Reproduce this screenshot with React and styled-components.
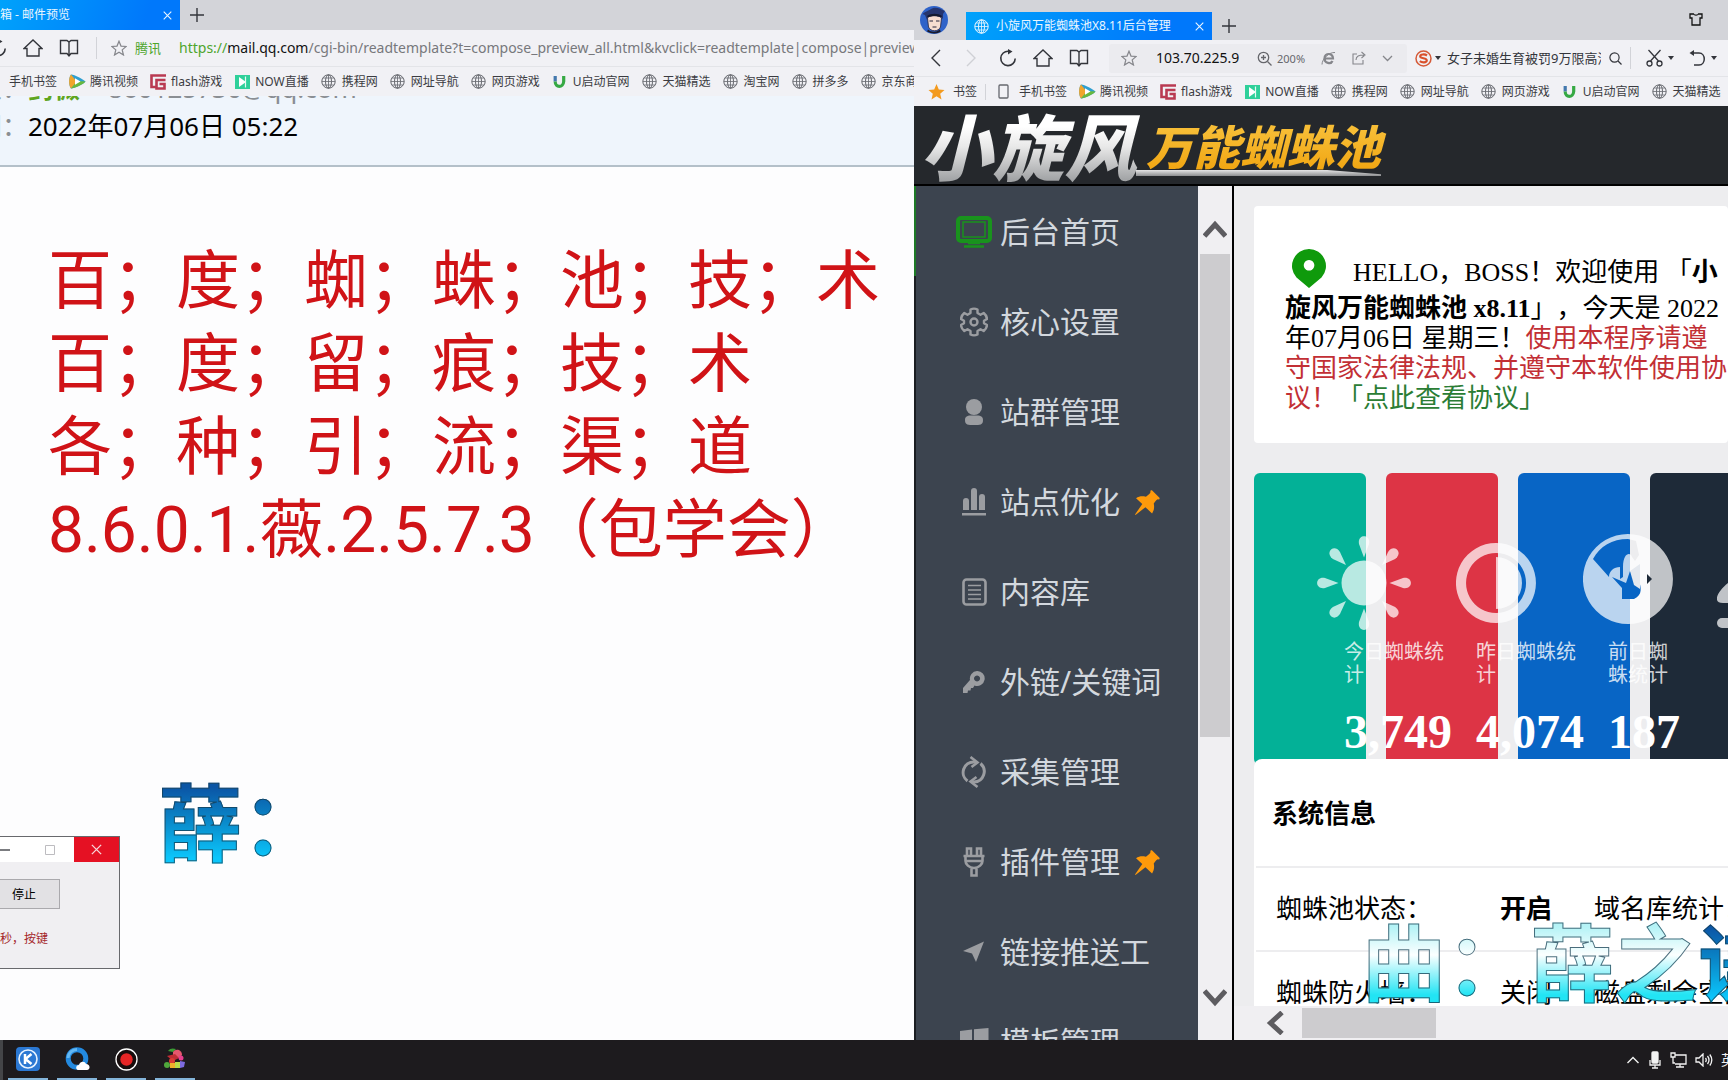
import React from 'react';
import styled, { createGlobalStyle, css } from 'styled-components';

const sans = '"Noto Sans", "Noto Sans CJK SC", sans-serif';
const serif = '"Liberation Serif", "Noto Sans CJK SC", serif';

const GlobalStyle = createGlobalStyle`
  * { box-sizing: border-box; }
  body { margin: 0; overflow: hidden; font-family: ${sans}; text-spacing-trim: space-all; color: #000; background: #fdfdfe; }
  button, input { font: inherit; color: inherit; }
  a { color: inherit; text-decoration: none; }
  svg { display: block; flex: none; }
`;

/* ---------- desktop ---------- */

const Screen = styled.div`
  display: flex;
  flex-direction: column;
  height: 100vh;
  overflow: hidden;
`;

const Desktop = styled.div`
  position: relative;
  display: flex;
  flex: 1;
  min-height: 0;
`;

const BrowserWindow = styled.section`
  display: flex;
  flex-direction: column;
  flex: ${(p) => p.$share} 1 0;
  min-width: 0;
  overflow: hidden;
`;

/* ---------- browser chrome ---------- */

const PlainButton = styled.button`
  display: flex;
  align-items: center;
  justify-content: center;
  flex: none;
  border: 0;
  padding: 0;
  background: none;
  color: ${(p) => p.$color || '#33353b'};
`;

const TabStrip = styled.div`
  display: flex;
  align-items: flex-end;
  flex: none;
  height: ${(p) => p.$height};
  background: #d3d4d9;
`;

const Tab = styled.div`
  display: flex;
  align-items: center;
  flex: none;
  width: ${(p) => p.$width};
  height: ${(p) => p.$height};
  padding: 0 8px 0 ${(p) => p.$start};
  gap: 7px;
  color: #eaf6ff;
  font-size: 12px;
  line-height: 18px;
  white-space: nowrap;
  background: linear-gradient(110deg, #00a2fb, #0078fb 80%);
`;

const TabTitle = styled.span`
  display: flex;
  justify-content: ${(p) => (p.$clipStart ? 'flex-end' : 'flex-start')};
  width: ${(p) => p.$width || 'auto'};
  overflow: hidden;
`;

const CloseTab = styled(PlainButton)`
  margin-left: auto;
`;

const NewTab = styled(PlainButton)`
  width: 34px;
  height: ${(p) => p.$height};
`;

const AvatarSlot = styled.div`
  width: 52px;
  padding: 0 0 6px 6px;
`;

const SkinButton = styled(PlainButton)`
  margin: 0 25px 14px auto;
`;

const Toolbar = styled.div`
  display: flex;
  align-items: center;
  flex: none;
  height: 37px;
  color: #33353b;
  background: #f1f1f5;
  border-bottom: 1px solid #e3e4e8;
  overflow: hidden;
`;

const NavButtons = styled.div`
  display: flex;
  align-items: center;
  gap: 16px;
  padding-right: ${(p) => p.$end};
  margin-left: ${(p) => p.$start};
`;

const Divider = styled.span`
  flex: none;
  width: 1px;
  height: ${(p) => p.$height || '22px'};
  margin: 0 ${(p) => p.$inset || '0px'};
  background: #d2d3d8;
`;

const SiteLine = styled.div`
  display: flex;
  align-items: center;
  padding-left: 14px;
  font-size: 14px;
  line-height: 20px;
  white-space: nowrap;
`;

const SiteOwner = styled.span`
  margin: 0 18px 0 8px;
  color: #4ea52c;
  font-size: 13px;
`;

const Url = styled.a`
  color: #77787c;
  b { color: #111; font-weight: 400; }
  i { color: #4ea52c; font-style: normal; }
`;

const AddressBox = styled.div`
  display: flex;
  align-items: center;
  flex: none;
  width: 298px;
  height: 29px;
  padding-left: 12px;
  border-radius: 3px;
  color: #85868b;
  background: #ebebef;
`;

const BareInput = styled.input`
  width: ${(p) => p.$width};
  flex: none;
  border: 0;
  padding: 0;
  margin: 0 ${(p) => p.$after} 0 ${(p) => p.$before};
  outline: 0;
  background: none;
  color: ${(p) => p.$color};
  font-size: ${(p) => p.$size};
  line-height: 20px;
`;

const AddressTools = styled.div`
  display: flex;
  align-items: center;
  gap: 16px;
  font-size: 11px;
`;

const ToolButton = styled(PlainButton)`
  gap: 5px;
`;

const SearchBox = styled.label`
  display: flex;
  align-items: center;
  flex: none;
  gap: 3px;
  padding: 0 8px;
`;

const EditTools = styled.div`
  display: flex;
  align-items: center;
  gap: 15px;
  padding-left: 15px;
`;

const Bookmarks = styled.nav`
  display: flex;
  align-items: center;
  flex: none;
  gap: 11px;
  height: 29px;
  padding-left: ${(p) => p.$start};
  color: #3b3c42;
  font-size: 12px;
  line-height: 18px;
  white-space: nowrap;
  background: #f1f1f5;
  overflow: hidden;
`;

const Bookmark = styled.a`
  display: flex;
  align-items: center;
  flex: none;
  gap: ${(p) => p.$gap || '4px'};
`;

const IconSlot = styled.span`
  display: flex;
  align-items: center;
  justify-content: center;
  width: 18px;
  color: #66686e;
`;

/* ---------- mail page ---------- */

const MailHeader = styled.header`
  display: flex;
  flex-direction: column;
  justify-content: flex-end;
  flex: none;
  height: 71px;
  padding-bottom: 20px;
  overflow: hidden;
  font-size: 26px;
  line-height: 38px;
  white-space: nowrap;
  background: #eff5fc;
  border-bottom: 2px solid #b4c0c9;
`;

const MailField = styled.div`
  display: flex;
  flex: none;
`;

const MailLabel = styled.span`
  display: flex;
  justify-content: flex-end;
  width: 28px;
  overflow: hidden;
  color: #8a8e93;
`;

const Sender = styled.span`
  color: ${(p) => (p.$name ? '#5fa51f' : '#8a8e93')};
  font-weight: ${(p) => (p.$name ? 700 : 400)};
  margin-right: 28px;
`;

const MailBody = styled.main`
  flex: 1;
  padding: 73px 0 0 48px;
  color: #d01317;
  font-family: Roboto, "Noto Sans CJK SC", sans-serif;
  font-size: 64px;
  line-height: 83px;
  white-space: nowrap;
  background: #fdfdfe;
  p { margin: 0; }
`;

/* ---------- small dialog ---------- */

const Dialog = styled.aside`
  position: absolute;
  left: 0;
  bottom: 71px;
  width: 120px;
  height: 133px;
  border: 1px solid #68696d;
  border-left: 0;
  background: #f0eff2;
  font-size: 12px;
  line-height: 18px;
`;

const DialogBar = styled.div`
  display: flex;
  align-items: stretch;
  height: 25px;
  background: #fff;
`;

const MaximizeDialog = styled(PlainButton)`
  margin: 0 19px 0 auto;
`;

const CloseDialog = styled(PlainButton)`
  width: 45px;
  background: #e51123;
`;

const StopButton = styled.button`
  display: block;
  width: 60px;
  height: 30px;
  margin: 17px 0 0;
  padding: 2px 12px 0;
  border: 1px solid #aaa9ad;
  border-left: 0;
  text-align: left;
  background: #e2e1e4;
`;

const DialogNote = styled.p`
  margin: 21px 0 0;
  color: #a5262a;
`;

/* ---------- admin page ---------- */

const AdminHeader = styled.header`
  display: flex;
  align-items: flex-start;
  flex: none;
  height: 80px;
  padding-left: 6px;
  overflow: hidden;
  background: #25282c;
  border-bottom: 2px solid #000;
`;

const Logo = styled.div`
  position: relative;
  display: flex;
  font-style: italic;
  font-weight: 900;
  white-space: nowrap;
`;

const LogoText = styled.span`
  padding-right: ${(p) => p.$tail};
  font-size: ${(p) => p.$size};
  line-height: 82px;
  color: transparent;
  background: ${(p) => p.$fill};
  background-clip: text;
  -webkit-background-clip: text;
`;

const LogoRule = styled.span`
  position: absolute;
  left: 216px;
  right: 14px;
  top: 64px;
  height: 6px;
  background: linear-gradient(#e6e6e6, #8d8f91);
  clip-path: polygon(0 0, 78% 0, 100% 70%, 100% 100%, 0 100%);
`;

const AdminBody = styled.div`
  display: flex;
  flex: 1;
  min-height: 0;
`;

const SideMenu = styled.nav`
  flex: none;
  width: 284px;
  overflow: hidden;
  background: #3c444f;
`;

const MenuItem = styled.a`
  display: flex;
  align-items: center;
  height: 90px;
  padding: 2px 0 0 38px;
  border-left: 2px solid ${(p) => (p.$active ? '#1d7a26' : '#1b1e22')};
  color: #d3d8de;
  font-size: 30px;
  line-height: 40px;
  white-space: nowrap;
`;

const MenuIcon = styled.span`
  display: flex;
  justify-content: center;
  width: 40px;
  margin-right: 6px;
  color: #9b9da1;
`;

const MenuPin = styled.span`
  margin-left: 15px;
`;

const VerticalScroll = styled.div`
  display: flex;
  flex-direction: column;
  align-items: center;
  flex: none;
  width: 36px;
  padding-bottom: 30px;
  background: #f0eff2;
  border-right: 2px solid #000;
`;

const ScrollEnd = styled(PlainButton)`
  width: 32px;
  height: ${(p) => p.$height};
  padding-top: ${(p) => p.$top || '0px'};
  color: #5d5c60;
`;

const ScrollTrack = styled.div`
  flex: 1;
  width: 30px;
`;

const VerticalThumb = styled.div`
  height: 66%;
  background: #cdcccf;
`;

const Workspace = styled.div`
  display: flex;
  flex-direction: column;
  flex: 1;
  min-width: 0;
`;

const WorkPage = styled.main`
  flex: 1;
  min-height: 0;
  padding: 20px 0 0 20px;
  overflow: hidden;
  background: #ededef;
`;

const Notice = styled.section`
  height: 237px;
  padding: 40px 0 0 31px;
  border-radius: 4px;
  background: #fff;
  font-family: ${serif};
  font-size: 26px;
  line-height: 30px;
  white-space: nowrap;
  p { margin: 0; }
`;

const NoticeLead = styled.span`
  display: flex;
  align-items: flex-end;
  gap: 27px;
  height: 42px;
  padding-left: 7px;
  margin-bottom: 6px;
`;

const Warning = styled.span`
  color: #c22f35;
`;

const Agreement = styled.a`
  color: #2b7d35;
`;

const StatRow = styled.section`
  display: flex;
  gap: 20px;
  margin-top: 30px;
`;

const StatCard = styled.article`
  flex: none;
  width: 112px;
  height: 292px;
  border-radius: 6px;
  background: ${(p) => p.$fill};
  font-family: ${serif};
`;

const StatContent = styled.div`
  position: relative;
  z-index: 1;
  width: ${(p) => p.$width};
  padding: 52px 0 0 60px;
`;

const StatIcon = styled.div`
  display: flex;
  align-items: center;
  justify-content: center;
  width: 100px;
  height: 116px;
  color: rgba(255, 255, 255, 0.72);
`;

const StatLabel = styled.div`
  height: 63px;
  margin-left: 30px;
  color: rgba(255, 255, 255, 0.8);
  font-size: 20px;
  line-height: 23px;
`;

const StatValue = styled.strong`
  display: block;
  margin-left: 30px;
  color: #fff;
  font-size: 48px;
  line-height: 56px;
`;

const InfoPanel = styled.section`
  position: relative;
  z-index: 2;
  margin-top: -6px;
  border-radius: 8px 0 0 0;
  background: #fff;
  font-size: 26px;
  white-space: nowrap;
`;

const InfoTitle = styled.h2`
  margin: 0;
  padding: 34px 0 33px 18px;
  font-size: 26px;
  line-height: 40px;
`;

const InfoTable = styled.table`
  margin-left: 2px;
  border-collapse: collapse;
  table-layout: fixed;
  width: 800px;
`;

const InfoCell = styled.td`
  width: ${(p) => p.$width || 'auto'};
  height: 84px;
  padding: 0 0 3px 20px;
  border-top: 2px solid #ededef;
  font-weight: ${(p) => (p.$strong ? 700 : 400)};
  line-height: 40px;
`;

const HorizontalScroll = styled.div`
  display: flex;
  align-items: center;
  flex: none;
  gap: 11px;
  height: 34px;
  padding-left: 25px;
  background: #f0eff2;
`;

const HorizontalThumb = styled.div`
  width: 134px;
  height: 30px;
  background: #cdcccf;
`;

/* ---------- lyrics drawn over the windows ---------- */

const Lyric = styled.div`
  position: absolute;
  left: ${(p) => p.$left};
  bottom: ${(p) => p.$bottom};
  z-index: 5;
  display: flex;
  font-size: 84px;
  font-weight: 700;
  line-height: 100px;
  white-space: nowrap;
  pointer-events: none;
`;

const sung = css`
  background-image: linear-gradient(#0b55a5 14%, #0a8ccc 50%, #0bc6fb 85%);
`;
const unsung = css`
  background-image: linear-gradient(#b5f3f6 14%, #fbffff 42%, #22e4f4 82%);
`;

const LyricPart = styled.span`
  ${(p) => (p.$sung ? sung : unsung)}
  color: transparent;
  background-clip: text;
  -webkit-background-clip: text;
  -webkit-text-stroke: 1px rgba(20, 60, 80, 0.75);
`;

/* ---------- task bar ---------- */

const Taskbar = styled.footer`
  display: flex;
  align-items: stretch;
  flex: none;
  height: 40px;
  color: #f2f2f2;
  background: #1d1b1e;
  overflow: hidden;
`;

const TaskEdge = styled.span`
  width: 3px;
  margin-right: 5px;
  background: #444548;
`;

const TaskButton = styled(PlainButton)`
  width: 40px;
  margin-right: 9px;
  border-bottom: 2px solid #84b5da;
`;

const Tray = styled.div`
  display: flex;
  align-items: center;
  gap: 8px;
  width: 102px;
  margin-left: auto;
  font-size: 14px;
  line-height: 20px;
  white-space: nowrap;
`;

/* ---------- drawings ---------- */

const Line = ({ w, h, box, sw = 1.3, children }) => (
  <svg width={w} height={h || w} viewBox={box || `0 0 ${w} ${h || w}`} fill="none" stroke="currentColor" strokeWidth={sw} aria-hidden="true">
    {children}
  </svg>
);

const Solid = ({ w, h, box, children }) => (
  <svg width={w} height={h || w} viewBox={box || `0 0 ${w} ${h || w}`} fill="currentColor" aria-hidden="true">
    {children}
  </svg>
);

const GlobeIcon = () => (
  <Line w={15} sw={1}>
    <circle cx="7.5" cy="7.5" r="6.7" />
    <ellipse cx="7.5" cy="7.5" rx="3" ry="6.7" />
    <path d="M7.5 .8v13.4M.8 7.500h13.4M2 4h11M2 11h11" strokeWidth=".8" />
  </Line>
);
const PlusIcon = () => <Line w={14} sw={1.4}><path d="M7 0v14M0 7h14" /></Line>;
const CrossIcon = ({ size = 9 }) => <Line w={size} box="0 0 9 9" sw={1.1}><path d="M.7.7l7.6 7.6M8.3.7L.7 8.3" /></Line>;
const ReloadIcon = () => (
  <Line w={18} sw={1.6}>
    <path d="M9.5 2.2A7.2 7.2 0 1 0 16.2 9.5" />
    <path d="M9 0l4.5 2.4L9 5.4z" fill="currentColor" stroke="none" />
  </Line>
);
const HomeIcon = () => <Line w={20} sw={1.4}><path d="M1 10.5L10 2l9 8.500h-3V18H4v-7.500z" /></Line>;
const BookIcon = () => <Line w={20} sw={1.4}><path d="M1.500 2.500H8l2 1.500 2-1.500h6.500v13H12L10 18l-2-2.500H1.500zM10 4v13.500" /></Line>;
const StarIcon = () => <Line w={16} sw={1.200}><path d="M8 1.200l2 4.900 5.200.4-4 3.400 1.300 5.100L8 12.200 3.500 15l1.300-5.100-4-3.400L6 6.100z" /></Line>;
const CaretIcon = () => <Solid w={6} h={4}><path d="M0 0h6L3 4z" /></Solid>;

const VideoIcon = () => (
  <svg width="17" height="15" viewBox="0 0 17 15" aria-hidden="true">
    <path d="M2 .5C4 0 15 5.500 16.500 7.500 15 10 5 14.500 2 14.500-.5 12-.5 3 2 .5z" fill="#2f9fd0" />
    <path d="M2 .5C-.5 3-.5 12 2 14.500L8 8z" fill="#f0a52c" />
    <path d="M2 14.500c3 0 13-4.500 14.500-7L8 7z" fill="#69b83c" />
    <path d="M6 4.300l5.500 3.200L6 10.700z" fill="#fff" />
  </svg>
);
const FlashIcon = () => (
  <svg width="16" height="16" viewBox="0 0 16 16" fill="none" stroke="#b93a52" strokeWidth="2.600" aria-hidden="true">
    <path d="M16 1.500H1.500v11.500h4M15.500 6H6.500v8.500h8V10H9.500" />
  </svg>
);
const NowIcon = () => (
  <svg width="15" height="14" viewBox="0 0 15 14" aria-hidden="true">
    <path d="M0 0h15v14H0z" fill="#2fd09a" />
    <path d="M4 2l7 5-7 5z" fill="#fff" />
    <path d="M10.500 1.500v11" stroke="#e9fbf4" strokeWidth="1.200" />
  </svg>
);
const UIcon = () => (
  <svg width="14" height="14" viewBox="0 0 14 14" fill="none" strokeWidth="3.200" aria-hidden="true">
    <path d="M2.200 1v5.500" stroke="#4378ad" />
    <path d="M2.200 6.500c0 6.500 8 6.500 8.500 0V1" stroke="#36a944" />
  </svg>
);
const OrangeStar = () => <svg width="17" height="16" viewBox="0 0 16 16" aria-hidden="true"><path fill="#f39a1e" d="M8 0l2.300 5.400 5.700.5-4.300 3.800L13 15.500 8 12.300l-5 3.200 1.300-5.800L0 5.900l5.700-.5z" /></svg>;
const PhoneIcon = () => <Line w={11} h={15}><rect x="1" y="1" width="9" height="13" rx="1" /></Line>;

const Avatar = () => (
  <svg width="28" height="28" viewBox="0 0 28 28" aria-hidden="true">
    <circle cx="14" cy="14" r="14" fill="#2f63c9" />
    <path d="M7.500 12c0-3 13-3 14 0l-1 9c-2 5-10 5-12 0z" fill="#f7ddd0" stroke="#20203a" strokeWidth=".8" />
    <path d="M2.500 8C6 5 8 5 11 3c5-3 9 0 14 2l-2 3v5l-2-2c-4-2-9-2-13 0l-1 3-2-5z" fill="#26356e" />
    <path d="M7 10c4-3 11-3 15 0l-1 1.500c-4-2-9-2-13 0z" fill="#151a30" />
    <path d="M9.500 15h3.500M16 15h3.500M12.500 21h4" stroke="#26243a" />
    <path d="M8 23.500l-1 2c5 2.500 10 2.500 14 0l-1.500-2c-3 3-8 3-11.500 0z" fill="#1c1c2c" />
  </svg>
);

const PushPin = () => (
  <svg width="25" height="25" viewBox="0 0 24 24" aria-hidden="true">
    <path fill="#ff9a0a" d="M16.500.5l7 7c.4 1-.3 1.700-1 1.500-1.400-.2-2.100.6-4.500 4 .8 4 .2 6.500-1.600 9.500L10 16.500.5 24 0 23.500 7 13.500 1 8c3-2 5.500-2.300 9.500-1.500 3-2.500 4.700-3.500 4.300-5-.2-.9.700-1.700 1.700-1z" />
  </svg>
);

const menuIcons = {
  screen: (
    <svg width="36" height="32" viewBox="0 0 36 32" fill="none" stroke="#19931d" aria-hidden="true">
      <rect x="2" y="2" width="32" height="23" rx="3" strokeWidth="4" />
      <rect x="7" y="6" width="22" height="15" strokeWidth="1.500" />
      <path d="M12 27h12M8 30.500h20" strokeWidth="2.500" />
    </svg>
  ),
  gear: (
    <Line w={28} h={30} sw={2.400}>
      <path d="M10.500 2.500q3.500-1.800 7 0v3.500l3 1.800 3.200-1.800q3 2.500 3.300 6l-3 1.800v2.400l3 1.800q-.3 3.500-3.300 6l-3.200-1.800-3 1.800v3.500q-3.500 1.800-7 0v-3.500l-3-1.800-3.200 1.800q-3-2.500-3.300-6l3-1.800v-2.400l-3-1.800q.3-3.500 3.300-6l3.200 1.800 3-1.800z" strokeLinejoin="round" />
      <circle cx="14" cy="15" r="3.500" />
    </Line>
  ),
  user: <Solid w={20} h={26}><circle cx="10" cy="8" r="8" /><path d="M1 21c0-5 5-4.500 9-4.500s9-.5 9 4.500c0 5-3 5-9 5s-9 0-9-5z" /></Solid>,
  chart: <Solid w={24} h={28}><rect x="1" y="10" width="6" height="12" rx="3" /><rect x="9" width="6" height="22" rx="3" /><rect x="17" y="6" width="6" height="16" rx="3" /><path d="M1 18h6v4H1zM9 18h6v4H9zM17 18h6v4h-6zM0 25h24v2.500H0z" /></Solid>,
  list: <Line w={25} h={28} sw={2.600}><rect x="1.500" y="1.500" width="22" height="25" rx="3" /><path d="M6 7.500h13M6 12h13M6 16.500h13M6 21h13" strokeWidth="1.500" /></Line>,
  key: <Solid w={22} h={22}><path fillRule="evenodd" d="M14 0a7.500 7.500 0 1 1-2.500 14.500L10 17H8l-.5 2.500H5L4.500 22H0v-5l7-8A7.500 7.500 0 0 1 14 0zm0 4.500a3 3 0 1 0 .1 0z" /></Solid>,
  cycle: (
    <Line w={26} h={32} sw={3}>
      <path d="M6.500 25A10.500 10.500 0 0 1 13 6h2M19.500 7.500A10.500 10.500 0 0 1 13 26h-2" />
      <path d="M9.500 1l7 5.500-6 4.500M16.500 31l-7-5.500 6-4.500" strokeWidth="2.600" />
    </Line>
  ),
  plug: <Line w={22} h={30} sw={2.600}><path d="M4 8V1.500h4V8M14 8V1.500h4V8M.5 9h21M2.500 9v5c0 3 3.500 7 8.500 7s8.500-4 8.500-7V9M3 14h16M8.500 21v7.500h5V21" /></Line>,
  send: <Solid w={22} h={22}><path d="M21 .5L13 21l-4-8.500L0 10z" /></Solid>,
  windows: <Solid w={29} h={28}><path d="M0 3l12-1.500V14H0zM14 1.200L28.500 0v14H14zM0 16h12v11L0 25.500zM14 16h14.500v12L14 26.800z" /></Solid>,
};

const MapPin = () => <svg width="34" height="39" viewBox="0 0 34 39" aria-hidden="true"><path fill="#0f9a0c" fillRule="evenodd" d="M17 0a17 17 0 0 1 12.500 28.500L17 39 4.500 28.500A17 17 0 0 1 17 0zm0 11a5.300 5.300 0 1 0 .1 0z" /></svg>;

const SunArt = () => (
  <Solid w={94}>
    <circle cx="47" cy="47" r="22.500" />
    {[0, 45, 90, 135, 180, 225, 270, 315].map((angle) => (
      <path key={angle} transform={`rotate(${angle} 47 47)`} d="M47 21.500L42 8C40-2.500 54-2.500 52 8z" />
    ))}
  </Solid>
);
const RingArt = () => (
  <Solid w={80}>
    <path fillRule="evenodd" d="M40 0a40 40 0 1 1-.1 0zM40 10a30 30 0 1 0 .1 0z" />
    <path d="M40 14a26 26 0 0 1 0 52z" />
  </Solid>
);
const GlobeArt = () => (
  <Solid w={90} h={98}>
    <path fillRule="evenodd" d="M45 0a45 45 0 1 1-.1 0zM10 25C17 12 29 5 45 5l8 2 3 14-4 6-3-4c-1-5-9-5-9 10v10l-3 2V33c-6 0-11 4-11 10z" />
    <path d="M29 43l10 11v11h12c9-4 7-12 5-18l-9-10-4 12z" fill="#0865c5" />
    <path d="M47 37l4 14 6 4V30z" fill="#e4e8ee" />
    <path d="M64 40l5 5-5 5z" fill="#1e2a38" />
  </Solid>
);
const BellArt = () => <Solid w={86} h={90}><path d="M43 0c9 0 9 8 12 14 14 6 8 22 20 34 12 8 16 17 5 17H6C-5 65 0 54 11 45c12-8 6-25 20-31 3-6 3-14 12-14z" /><rect y="80" width="86" height="10" rx="5" /></Solid>;

const Chevron = ({ d, w, h }) => <Line w={w} h={h} sw={5}><path d={d} /></Line>;

/* ---------- data ---------- */

const bookmarks = [
  ['腾讯视频', VideoIcon],
  ['flash游戏', FlashIcon],
  ['NOW直播', NowIcon],
  ['携程网', GlobeIcon],
  ['网址导航', GlobeIcon],
  ['网页游戏', GlobeIcon],
  ['U启动官网', UIcon],
  ['天猫精选', GlobeIcon],
  ['淘宝网', GlobeIcon],
  ['拼多多', GlobeIcon],
  ['京东商城', GlobeIcon],
];

const menu = [
  ['后台首页', 'screen'],
  ['核心设置', 'gear'],
  ['站群管理', 'user'],
  ['站点优化', 'chart', true],
  ['内容库', 'list'],
  ['外链/关键词', 'key'],
  ['采集管理', 'cycle'],
  ['插件管理', 'plug', true],
  ['链接推送工', 'send'],
  ['模板管理', 'windows'],
];

const stats = [
  ['今日蜘蛛统计', '3,749', '#03b197', SunArt, '200px'],
  ['昨日蜘蛛统计', '4,074', '#dd3445', RingArt, '200px'],
  ['前日蜘蛛统计', '187', '#0865c5', GlobeArt, '160px'],
  ['', '', '#1e2a38', BellArt, '200px'],
];

const BookmarkLinks = ({ count }) =>
  bookmarks.slice(0, count).map(([name, Icon]) => (
    <Bookmark href="#" key={name}>
      <IconSlot><Icon /></IconSlot>
      {name}
    </Bookmark>
  ));

/* ---------- windows ---------- */

const MailWindow = () => (
  <BrowserWindow $share={914}>
    <TabStrip $height="30px">
      <Tab $width="180px" $height="30px" $start="0px">
        <TabTitle $clipStart $width="70px">QQ邮箱 - 邮件预览</TabTitle>
        <CloseTab $color="#eaf6ff" aria-label="关闭标签页"><CrossIcon /></CloseTab>
      </Tab>
      <NewTab $height="30px" aria-label="新标签页"><PlusIcon /></NewTab>
    </TabStrip>
    <Toolbar>
      <NavButtons $start="-11px" $end="17px">
        <PlainButton aria-label="刷新"><ReloadIcon /></PlainButton>
        <PlainButton aria-label="主页"><HomeIcon /></PlainButton>
        <PlainButton aria-label="阅读"><BookIcon /></PlainButton>
      </NavButtons>
      <Divider />
      <SiteLine>
        <PlainButton $color="#85868b" aria-label="收藏"><StarIcon /></PlainButton>
        <SiteOwner>腾讯</SiteOwner>
        <Url href="#"><i>https://</i><b>mail.qq.com</b>/cgi-bin/readtemplate?t=compose_preview_all.html&amp;kvclick=readtemplate|compose|preview</Url>
      </SiteLine>
    </Toolbar>
    <Bookmarks $start="9px">
      <Bookmark href="#">手机书签</Bookmark>
      <BookmarkLinks count={11} />
    </Bookmarks>
    <MailHeader>
      <MailField><MailLabel>发件人：</MailLabel><Sender $name>药薇</Sender><Sender>860125730@qq.com</Sender></MailField>
      <MailField><MailLabel>时间：</MailLabel>2022年07月06日 05:22</MailField>
    </MailHeader>
    <MailBody>
      <p>百；度；蜘；蛛；池；技；术</p>
      <p>百；度；留；痕；技；术</p>
      <p>各；种；引；流；渠；道</p>
      <p>8.6.0.1.薇.2.5.7.3（包学会）</p>
    </MailBody>
  </BrowserWindow>
);

const AdminWindow = () => (
  <BrowserWindow $share={814}>
    <TabStrip $height="40px">
      <AvatarSlot><Avatar /></AvatarSlot>
      <Tab $width="246px" $height="28px" $start="8px">
        <GlobeIcon />
        <TabTitle>小旋风万能蜘蛛池X8.11后台管理</TabTitle>
        <CloseTab $color="#eaf6ff" aria-label="关闭标签页"><CrossIcon /></CloseTab>
      </Tab>
      <NewTab $height="28px" aria-label="新标签页"><PlusIcon /></NewTab>
      <SkinButton $color="#111" aria-label="皮肤">
        <Line w={14} h={13}><path d="M1 1h3.500c1 1.500 4 1.500 5 0H13v4h-2v7H3V5H1z" /></Line>
      </SkinButton>
    </TabStrip>
    <Toolbar>
      <NavButtons $start="14px" $end="20px">
        <PlainButton aria-label="后退"><Line w={16} h={18} sw={1.400}><path d="M12 1L4 9l8 8" /></Line></PlainButton>
        <PlainButton $color="#cfd0d5" aria-label="前进"><Line w={23} h={18} sw={1.400}><path d="M7 1l8 8-8 8" /></Line></PlainButton>
        <PlainButton aria-label="刷新"><ReloadIcon /></PlainButton>
        <PlainButton aria-label="主页"><HomeIcon /></PlainButton>
        <PlainButton aria-label="阅读"><BookIcon /></PlainButton>
      </NavButtons>
      <AddressBox>
        <PlainButton $color="#85868b" aria-label="收藏"><StarIcon /></PlainButton>
        <BareInput $width="101px" $before="19px" $after="0px" $size="14px" $color="#111" aria-label="地址" defaultValue="103.70.225.9" />
        <AddressTools>
          <ToolButton $color="#66676c">
            <Line w={15}><circle cx="6.500" cy="6.500" r="5.200" /><path d="M10.500 10.500l4 4M4 6.500h5M6.500 4v5" /></Line>
            200%
          </ToolButton>
          <PlainButton $color="#85868b" aria-label="兼容模式">
            <Line w={15} sw={2.200}><path d="M3.500 7.500h8.500c0-6-8.500-6-8.500 0 0 5 6.500 6 8 2.500" /><path d="M1 13.500C1 8 8 1 14 1.500" strokeWidth="1" /></Line>
          </PlainButton>
          <PlainButton $color="#85868b" aria-label="分享">
            <Line w={14} sw={1.100}><path d="M5 3H1v10h10V9M4 9c0-4 3-5 8-5M9.500 1L13 4 9.500 7" /></Line>
          </PlainButton>
          <PlainButton $color="#85868b" aria-label="更多"><Line w={11} h={7}><path d="M1 1l4.500 4.500L10 1" /></Line></PlainButton>
        </AddressTools>
      </AddressBox>
      <SearchBox>
        <svg width="17" height="17" viewBox="0 0 17 17" fill="none" aria-hidden="true">
          <circle cx="8.500" cy="8.500" r="7.500" stroke="#d55a38" strokeWidth="1.500" />
          <path d="M12 5.500C10 4 5 4 5.200 6.500c.2 2.300 6.600 1.300 6.600 4-.2 2.500-5 2.300-7 .7" stroke="#d9512c" strokeWidth="2.200" />
        </svg>
        <CaretIcon />
        <BareInput $width="154px" $before="3px" $after="5px" $size="13px" $color="#33353b" aria-label="搜索" defaultValue="女子未婚生育被罚9万限高消费" />
        <Line w={13} sw={1.200}><circle cx="5.500" cy="5.500" r="4.600" /><path d="M9 9l3.500 3.500" /></Line>
      </SearchBox>
      <Divider />
      <EditTools>
        <ToolButton aria-label="截图">
          <Line w={17} h={18}><path d="M2.500 1l10 11M14.500 1l-10 11" /><circle cx="3.500" cy="14.500" r="2.500" /><circle cx="13.500" cy="14.500" r="2.500" /></Line>
          <CaretIcon />
        </ToolButton>
        <ToolButton aria-label="撤销">
          <Line w={17} h={17} sw={1.500}><path d="M2 3h8c7 0 7 12 0 12H5" /><path d="M5 0L.5 3 5 6z" fill="currentColor" stroke="none" /></Line>
          <CaretIcon />
        </ToolButton>
        <Line w={16} sw={1.500}><circle cx="8" cy="8" r="7" /></Line>
      </EditTools>
    </Toolbar>
    <Bookmarks $start="13px">
      <Bookmark href="#" $gap="8px"><IconSlot><OrangeStar /></IconSlot>书签</Bookmark>
      <Divider $height="16px" $inset="-3px" />
      <Bookmark href="#" $gap="7px"><IconSlot><PhoneIcon /></IconSlot>手机书签</Bookmark>
      <BookmarkLinks count={8} />
    </Bookmarks>
    <AdminHeader>
      <Logo>
        <LogoText $size="72px" $tail="10px" $fill="linear-gradient(#fff 25%, #e8e8e8 50%, #a2a4a6 90%)">小旋风</LogoText>
        <LogoText $size="47px" $tail="14px" $fill="linear-gradient(#f7bd35 30%, #f0a511 80%)">万能蜘蛛池</LogoText>
        <LogoRule />
      </Logo>
    </AdminHeader>
    <AdminBody>
      <SideMenu>
        {menu.map(([name, icon, pinned], index) => (
          <MenuItem href="#" key={name} $active={index === 0}>
            <MenuIcon>{menuIcons[icon]}</MenuIcon>
            {name}
            {pinned && <MenuPin><PushPin /></MenuPin>}
          </MenuItem>
        ))}
      </SideMenu>
      <VerticalScroll>
        <ScrollEnd $height="68px" $top="18px" aria-label="向上滚动"><Chevron w={24} h={20} d="M1.500 17L12 5.500 22.500 17" /></ScrollEnd>
        <ScrollTrack><VerticalThumb /></ScrollTrack>
        <ScrollEnd $height="24px" aria-label="向下滚动"><Chevron w={24} h={20} d="M1.500 3L12 14.500 22.500 3" /></ScrollEnd>
      </VerticalScroll>
      <Workspace>
        <WorkPage>
          <Notice>
            <p>
              <NoticeLead><MapPin /><span>HELLO，BOSS！欢迎使用 「<b>小</b></span></NoticeLead>
              <b>旋风万能蜘蛛池 x8.11</b>」，今天是 2022<br />
              年07月06日 星期三！<Warning>使用本程序请遵<br />守国家法律法规、并遵守本软件使用协<br />议！</Warning>
              <Agreement href="#">「点此查看协议」</Agreement>
            </p>
          </Notice>
          <StatRow>
            {stats.map(([label, value, fill, Art, width]) => (
              <StatCard key={fill} $fill={fill}>
                <StatContent $width={width}>
                  <StatIcon><Art /></StatIcon>
                  <StatLabel>{label}</StatLabel>
                  <StatValue>{value}</StatValue>
                </StatContent>
              </StatCard>
            ))}
          </StatRow>
          <InfoPanel>
            <InfoTitle>系统信息</InfoTitle>
            <InfoTable>
              <tbody>
                <tr>
                  <InfoCell $width="224px">蜘蛛池状态：</InfoCell>
                  <InfoCell $width="94px" $strong>开启</InfoCell>
                  <InfoCell>域名库统计：</InfoCell>
                </tr>
                <tr>
                  <InfoCell>蜘蛛防火墙：</InfoCell>
                  <InfoCell>关闭</InfoCell>
                  <InfoCell>磁盘剩余空间：</InfoCell>
                </tr>
              </tbody>
            </InfoTable>
          </InfoPanel>
        </WorkPage>
        <HorizontalScroll>
          <ScrollEnd $height="30px" aria-label="向左滚动"><Chevron w={20} h={24} d="M17 1.500L5.500 12 17 22.500" /></ScrollEnd>
          <HorizontalThumb />
        </HorizontalScroll>
      </Workspace>
    </AdminBody>
  </BrowserWindow>
);

const DialogWindow = () => (
  <Dialog>
    <DialogBar>
      <PlainButton aria-label="最小化"><Line w={10} h={2}><path d="M0 1h10" /></Line></PlainButton>
      <MaximizeDialog $color="#bdbcc0" aria-label="最大化"><Line w={10} sw={1}><path d="M.5.5h9v9h-9z" /></Line></MaximizeDialog>
      <CloseDialog $color="#f7d6d9" aria-label="关闭"><CrossIcon size={11} /></CloseDialog>
    </DialogBar>
    <StopButton>停止</StopButton>
    <DialogNote>秒，按键</DialogNote>
  </Dialog>
);

const BottomBar = () => (
  <Taskbar>
    <TaskEdge />
    <TaskButton aria-label="酷狗">
      <svg width="24" height="24" viewBox="0 0 24 24" fill="none" aria-hidden="true">
        <rect width="24" height="24" rx="4" fill="#2b78d3" />
        <circle cx="12" cy="12" r="9" stroke="#e8f3ff" strokeWidth="1.600" />
        <path d="M9 7v10M15.500 7l-6 5 6 5" stroke="#fff" strokeWidth="2.500" />
      </svg>
    </TaskButton>
    <TaskButton aria-label="浏览器">
      <svg width="25" height="24" viewBox="0 0 25 24" fill="none" aria-hidden="true">
        <circle cx="12" cy="11.500" r="8.800" stroke="#238ae0" strokeWidth="5" />
        <path d="M3 11a9 9 0 0 1 9-8.500" stroke="#63b8f3" strokeWidth="3" />
        <path d="M13 23c-3-1-2-5 1-5 1-4 6-4 7-1 4 0 5 5 1 6z" fill="#fff" />
      </svg>
    </TaskButton>
    <TaskButton aria-label="录制">
      <svg width="23" height="23" viewBox="0 0 23 23" aria-hidden="true">
        <circle cx="11.500" cy="11.500" r="10.500" fill="#170d0d" stroke="#fff" strokeWidth="1.300" />
        <circle cx="11.500" cy="11.500" r="6.200" fill="#e62525" />
      </svg>
    </TaskButton>
    <TaskButton aria-label="图像">
      <svg width="24" height="22" viewBox="0 0 24 22" aria-hidden="true">
        <path d="M5 3c2-3 5-3 8-2L10 4z" fill="#3c9b35" />
        <path d="M10 4c3-4 9-2 9 3l-3 3-6-2z" fill="#e5576e" />
        <path d="M4 8l8-2 4 4-6 3z" fill="#c02d35" />
        <circle cx="4" cy="17" r="3" fill="#50a83c" />
        <circle cx="9" cy="13" r="3" fill="#d93c34" />
        <path d="M7 15h5v5H7z" fill="#f0b02a" />
        <path d="M12 14h5v6h-5z" fill="#b8dc4a" />
        <path d="M17 13l5 1-1 5-4 1z" fill="#7d6be0" />
        <circle cx="18" cy="10" r="2.500" fill="#e53e8e" />
      </svg>
    </TaskButton>
    <Tray>
      <Line w={14} h={14} sw={1.400}><path d="M1.500 10L7 4.500l5.500 5.500" /></Line>
      <Line w={14} h={18}><rect x="4" y="1" width="6" height="11" rx="1" fill="currentColor" /><path d="M2 9v5h10V9M7 14v3M4 17h6" /></Line>
      <Line w={17} h={16}><path d="M5 3h11v9H5M10 12v3M6 15h8M1 1h4v4H1zM3 5v6h2" /></Line>
      <Line w={18} h={14}><path d="M1 5h3l4-4v12L4 9H1zM10.500 5q1.500 2 0 4M12.500 3q3 4 0 8M14.800 1.500q4 5.500 0 11" /></Line>
      <span>英</span>
    </Tray>
  </Taskbar>
);

export default function App() {
  return (
    <Screen>
      <GlobalStyle />
      <Desktop>
        <MailWindow />
        <AdminWindow />
        <DialogWindow />
        <Lyric $left="158px" $bottom="167px"><LyricPart $sung>薛：</LyricPart></Lyric>
        <Lyric $left="1362px" $bottom="27px">
          <LyricPart>曲：薛之</LyricPart>
          <LyricPart $sung>谦</LyricPart>
        </Lyric>
      </Desktop>
      <BottomBar />
    </Screen>
  );
}
